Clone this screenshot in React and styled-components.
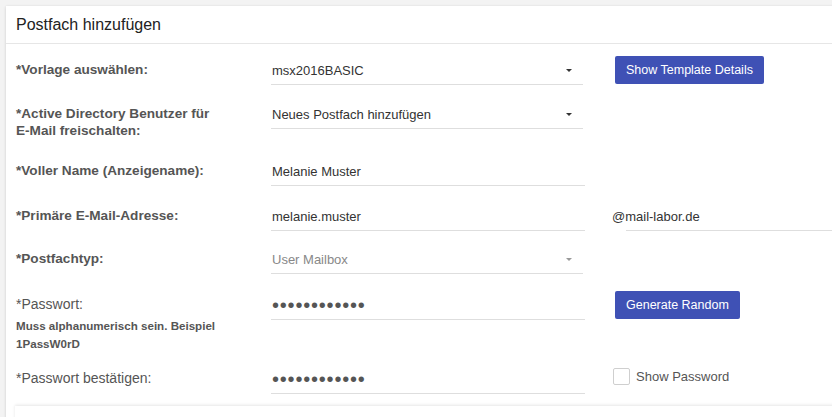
import React from "react";
import styled, { createGlobalStyle } from "styled-components";

const Global = createGlobalStyle`
  html, body { margin: 0; padding: 0; }
  body {
    background: #f3f3f3;
    font-family: "Liberation Sans", Arial, sans-serif;
    overflow: hidden;
  }
`;

const Page = styled.div`
  padding: 6px 0 0 6px;
  height: 417px;
  box-sizing: border-box;
  overflow: hidden;
`;

const Card = styled.section`
  background: #fff;
  width: calc(100% + 20px);
  box-shadow: 0 1px 3px rgba(0, 0, 0, 0.12), 0 0 2px rgba(0, 0, 0, 0.06);
  min-height: 460px;
`;

const Header = styled.header`
  height: 37px;
  display: flex;
  align-items: center;
  padding: 0 10px;
  border-bottom: 1px solid #e6e6e6;
`;

const Title = styled.h2`
  margin: 0;
  font-size: 16px;
  font-weight: normal;
  color: #222;
`;

const Form = styled.div`
  display: flex;
  flex-direction: column;
  padding: 12px 0 0 10px;
`;

const Row = styled.div`
  display: grid;
  grid-template-columns: 255px 314px 1fr;
  align-items: start;
  height: ${(p) => p.$h}px;
`;

const LabelCol = styled.div`
  padding-top: 5px;
`;

const Label = styled.label`
  display: block;
  font-size: ${(p) => (p.$light ? "14px" : "13.6px")};
  line-height: 17px;
  color: #555;
  font-weight: ${(p) => (p.$light ? "normal" : "bold")};
`;

const Hint = styled.div`
  margin-top: 4px;
  font-size: 11.6px;
  line-height: 18px;
  font-weight: bold;
  color: #555;
`;

const Field = styled.div`
  position: relative;
  height: 28px;
  border-bottom: 1px solid #dedede;
  display: flex;
  align-items: center;
  margin-right: ${(p) => (p.$select ? 2 : 0)}px;
`;

const TextInput = styled.input`
  border: none;
  outline: none;
  background: transparent;
  padding: 0 0 0 1px;
  width: 100%;
  height: 28px;
  font-family: "Liberation Sans", Arial, sans-serif;
  font-size: 13px;
  color: ${(p) => (p.$muted ? "#888" : "#333")};
`;

const PasswordInput = styled(TextInput)`
  font-size: 20px;
  letter-spacing: 0.8px;
  color: #555;
`;

const Caret = styled.span`
  position: absolute;
  right: 11px;
  top: 13px;
  width: 0;
  height: 0;
  border-left: 3px solid transparent;
  border-right: 3px solid transparent;
  border-top: 3px solid ${(p) => (p.$muted ? "#999" : "#333")};
`;

const Side = styled.div`
  padding-left: 30px;
  display: flex;
  align-items: center;
`;

const Button = styled.button`
  height: 28px;
  padding: 0 11px;
  border: none;
  border-radius: 2px;
  background: #3f51b5;
  color: #fff;
  font-family: "Liberation Sans", Arial, sans-serif;
  font-size: 12.5px;
  cursor: pointer;
`;

const Domain = styled.div`
  margin-left: -3px;
  position: relative;
  width: 100%;
  height: 28px;
  display: flex;
  align-items: center;
  font-size: 13px;
  color: #333;
  &::after {
    content: "";
    position: absolute;
    left: 14px;
    right: 0;
    bottom: -1px;
    border-bottom: 1px solid #dedede;
  }
`;

const CheckWrap = styled.label`
  margin-left: -2px;
  margin-top: 3px;
  display: flex;
  align-items: center;
  gap: 6px;
  font-size: 13px;
  color: #555;
`;

const Box = styled.span`
  width: 15px;
  height: 15px;
  border: 1px solid #cfcfcf;
  border-radius: 2px;
  background: #fff;
`;

const InnerCard = styled.div`
  margin: 0 0 0 9px;
  height: 60px;
  background: #fff;
  box-shadow: 0 -1px 3px rgba(0, 0, 0, 0.1);
`;

const Select = ({ value, muted }) => (
  <Field $select>
    <TextInput readOnly value={value} $muted={muted} />
    <Caret $muted={muted} />
  </Field>
);

export default function App() {
  return (
    <>
      <Global />
      <Page>
        <Card>
          <Header>
            <Title>Postfach hinzufügen</Title>
          </Header>
          <Form>
            <Row $h={44}>
              <LabelCol>
                <Label>*Vorlage auswählen:</Label>
              </LabelCol>
              <Select value="msx2016BASIC" />
              <Side>
                <Button>Show Template Details</Button>
              </Side>
            </Row>
            <Row $h={57}>
              <LabelCol>
                <Label>
                  *Active Directory Benutzer für
                  <br />
                  E-Mail freischalten:
                </Label>
              </LabelCol>
              <Select value="Neues Postfach hinzufügen" />
            </Row>
            <Row $h={45}>
              <LabelCol>
                <Label>*Voller Name (Anzeigename):</Label>
              </LabelCol>
              <Field>
                <TextInput readOnly value="Melanie Muster" />
              </Field>
            </Row>
            <Row $h={43}>
              <LabelCol>
                <Label>*Primäre E-Mail-Adresse:</Label>
              </LabelCol>
              <Field>
                <TextInput readOnly value="melanie.muster" />
              </Field>
              <Side>
                <Domain>@mail-labor.de</Domain>
              </Side>
            </Row>
            <Row $h={46}>
              <LabelCol>
                <Label>*Postfachtyp:</Label>
              </LabelCol>
              <Select value="User Mailbox" muted />
            </Row>
            <Row $h={74}>
              <LabelCol>
                <Label $light>*Passwort:</Label>
                <Hint>
                  Muss alphanumerisch sein. Beispiel
                  <br />
                  1PassW0rD
                </Hint>
              </LabelCol>
              <Field>
                <PasswordInput type="password" readOnly value="melanieMust1" />
              </Field>
              <Side>
                <Button>Generate Random</Button>
              </Side>
            </Row>
            <Row $h={41}>
              <LabelCol>
                <Label $light>*Passwort bestätigen:</Label>
              </LabelCol>
              <Field>
                <PasswordInput type="password" readOnly value="melanieMust1" />
              </Field>
              <Side>
                <CheckWrap>
                  <Box />
                  Show Password
                </CheckWrap>
              </Side>
            </Row>
          </Form>
          <InnerCard />
        </Card>
      </Page>
    </>
  );
}
